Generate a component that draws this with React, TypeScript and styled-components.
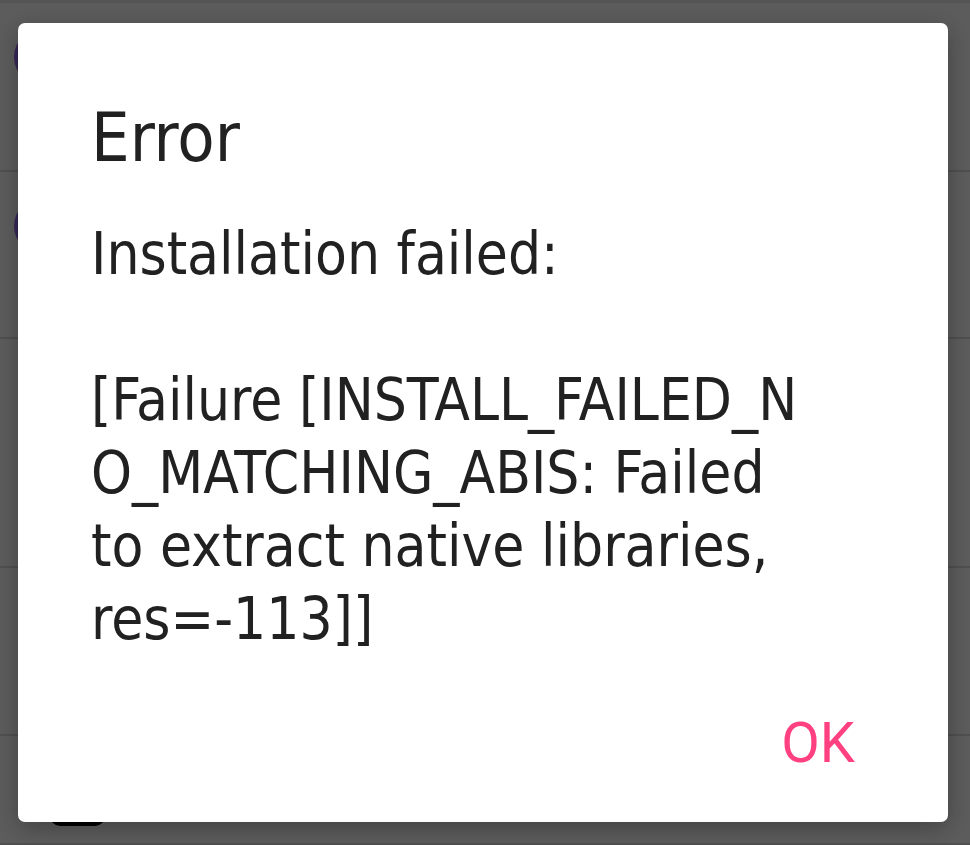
import styled, { createGlobalStyle } from "styled-components"

const GlobalStyle = createGlobalStyle`
    html, body {
        margin: 0;
        padding: 0;
        background: #e6e6e6;
    }
    * {
        box-sizing: border-box;
    }
`

interface ListRow {
    id: string
    height: number
    avatar?: boolean
    action?: boolean
}

// behind-the-dialog list, only slivers of it show at the edges
const rows: ListRow[] = [
    { id: "r1", height: 169, avatar: true },
    { id: "r2", height: 167, avatar: true },
    { id: "r3", height: 229 },
    { id: "r4", height: 168 },
    { id: "r5", height: 109, action: true },
]

const messageLines = [
    "Installation failed:",
    "",
    "[Failure [INSTALL_FAILED_N",
    "O_MATCHING_ABIS: Failed",
    "to extract native libraries,",
    "res=-113]]",
]

const App = () => {
    return (
        <>
            <GlobalStyle />
            <Page>
                <TopBar />
                {rows.map((row) => (
                    <Row key={row.id} $height={row.height}>
                        {row.avatar && <Avatar />}
                        {row.action && <ActionPill />}
                    </Row>
                ))}
            </Page>
            <Scrim>
                <Dialog role="alertdialog" aria-labelledby="dlg-title">
                    <Title id="dlg-title">Error</Title>
                    <Message>
                        {messageLines.map((line, i) => (
                            <Line key={i}>{line || "\u00a0"}</Line>
                        ))}
                    </Message>
                    <Actions>
                        <OkButton type="button">OK</OkButton>
                    </Actions>
                </Dialog>
            </Scrim>
        </>
    )
}

export default App

const Page = styled.div`
    display: flex;
    flex-direction: column;
    width: 970px;
    height: 845px;
    overflow: hidden;
    background: #e6e6e6;
`

const TopBar = styled.div`
    height: 3px;
    flex-shrink: 0;
    background: #d2d2d2;
`

const Row = styled.div<{ $height: number }>`
    display: flex;
    align-items: flex-start;
    flex-shrink: 0;
    height: ${(p) => p.$height}px;
    padding: 25px 0 0 14px;
    border-bottom: 2px solid #c6c6c6;
`

const Avatar = styled.div`
    width: 58px;
    height: 58px;
    border-radius: 50%;
    background: #8a5fd6;
`

const ActionPill = styled.div`
    width: 55px;
    height: 40px;
    margin: 25px 0 0 36px;
    border-radius: 10px;
    background: #000;
`

const Scrim = styled.div`
    position: fixed;
    inset: 0;
    display: flex;
    align-items: flex-start;
    background: rgba(0, 0, 0, 0.6);
`

const Dialog = styled.div`
    display: flex;
    flex-direction: column;
    width: 930px;
    height: 799px;
    margin: 23px 0 0 18px;
    padding: 70px 0 46px 73px;
    background: #fff;
    border-radius: 7px;
    box-shadow: 0 6px 24px rgba(0, 0, 0, 0.3);
`

const Title = styled.h2`
    margin: 0;
    font-family: "DejaVu Sans Condensed", "Liberation Sans", sans-serif;
    font-size: 68px;
    line-height: 90px;
    font-weight: 400;
    color: #212121;
`

const Message = styled.div`
    margin-top: 35px;
    font-family: "DejaVu Sans Condensed", "Liberation Sans", sans-serif;
    font-size: 58px;
    line-height: 73px;
    color: #212121;
`

const Line = styled.div`
    white-space: nowrap;
`

const Actions = styled.div`
    display: flex;
    justify-content: flex-end;
    margin-top: auto;
    padding-right: 72px;
`

const OkButton = styled.button`
    padding: 0 21px;
    border: none;
    background: none;
    font-family: Roboto, "Liberation Sans", sans-serif;
    font-size: 56px;
    line-height: 66px;
    color: #ff4081;
    cursor: pointer;
`
